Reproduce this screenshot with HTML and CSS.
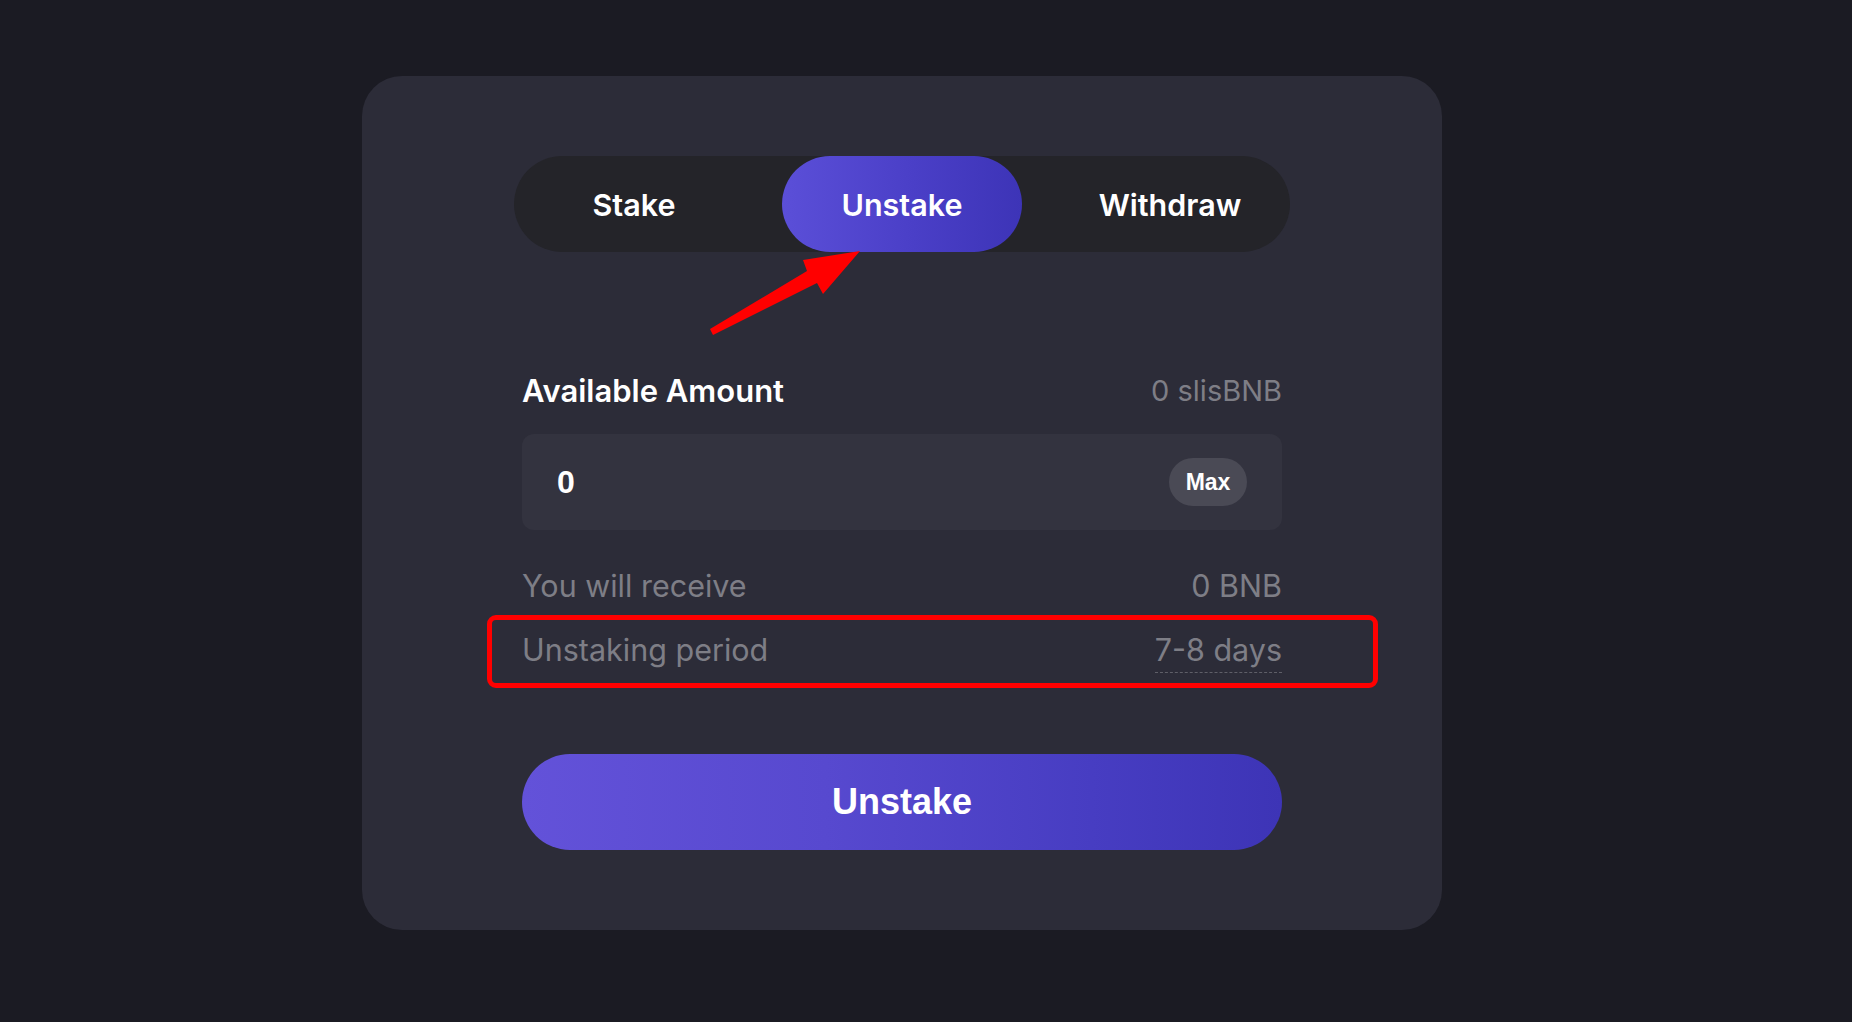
FILE: index.html
```html
<!DOCTYPE html>
<html lang="en">
<head>
<meta charset="utf-8">
<title>Unstake</title>
<link rel="stylesheet" href="styles.css">
</head>
<body>
<main class="card">
  <nav class="tabs">
    <button class="tab">Stake</button>
    <button class="tab active">Unstake</button>
    <button class="tab">Withdraw</button>
  </nav>

  <div class="row head-row">
    <span class="label-strong">Available Amount</span>
    <span class="muted">0 slisBNB</span>
  </div>

  <div class="input-box">
    <span class="amount">0</span>
    <button class="max">Max</button>
  </div>

  <div class="row info-row first">
    <span class="muted">You will receive</span>
    <span class="muted">0 BNB</span>
  </div>
  <div class="row info-row second">
    <span class="muted">Unstaking period</span>
    <span class="muted dashed">7-8 days</span>
  </div>

  <button class="submit">Unstake</button>
</main>

<div class="highlight-box"></div>
<svg class="arrow" width="1852" height="1022" viewBox="0 0 1852 1022">
  <polygon fill="#ff0000" points="860,251 803,260 807,271 710,329 713,335 817,283 823,294"/>
</svg>
</body>
</html>
```

FILE: styles.css
```css
* { box-sizing: border-box; }

html, body {
  margin: 0;
  padding: 0;
}

body {
  width: 1852px;
  height: 1022px;
  background: #1b1b23;
  font-family: Inter, "Noto Sans", sans-serif;
  overflow: hidden;
  position: relative;
}

.card {
  width: 1080px;
  height: 854px;
  margin: 76px 0 0 362px;
  padding: 80px 160px;
  background: #2c2c38;
  border-radius: 40px;
  display: flex;
  flex-direction: column;
}

.tabs {
  width: 776px;
  margin: 0 -8px;
  height: 96px;
  background: #242429;
  border-radius: 48px;
  display: flex;
  gap: 28px;
}

.tab {
  width: 240px;
  height: 96px;
  border: 0;
  border-radius: 48px;
  background: transparent;
  color: #ffffff;
  font-family: Inter, "Noto Sans", sans-serif;
  font-size: 30.5px;
  font-weight: 600;
  padding: 0;
}

.tab.active {
  background: linear-gradient(90deg, #5b4fd8 0%, #4a3fc7 55%, #3d34b7 100%);
}

.row {
  display: flex;
  justify-content: space-between;
  align-items: flex-start;
  height: 40px;
  line-height: 40px;
}

.head-row { margin-top: 119px; }

.label-strong {
  color: #ffffff;
  font-size: 31px;
  font-weight: 600;
}

.muted {
  color: #7e7e86;
  font-size: 30.5px;
  font-weight: 400;
}

.head-row .muted { font-size: 29px; }

.input-box {
  margin-top: 23px;
  height: 96px;
  background: #33333f;
  border-radius: 12px;
  display: flex;
  align-items: center;
  justify-content: space-between;
  padding: 0 35px 0 35px;
}

.amount {
  color: #ffffff;
  font-family: "Liberation Sans", Arial, sans-serif;
  font-weight: 700;
  font-size: 32px;
}

.max {
  height: 48px;
  width: 78px;
  border: 0;
  border-radius: 24px;
  background: #4a4a55;
  color: #ffffff;
  font-family: "Liberation Sans", Arial, sans-serif;
  font-weight: 700;
  font-size: 23px;
  padding: 0;
}

.info-row.first { margin-top: 36px; }
.info-row.second { margin-top: 24px; }

.dashed {
  display: inline-block;
  line-height: 40px;
  padding-bottom: 2px;
  border-bottom: 1px dashed #5f5f68;
}

.submit {
  margin-top: 84px;
  height: 96px;
  width: 760px;
  border: 0;
  border-radius: 48px;
  background: linear-gradient(90deg, #6352d9 0%, #5749cf 40%, #473dc2 75%, #3d34b6 100%);
  color: #ffffff;
  font-family: "Liberation Sans", Arial, sans-serif;
  font-weight: 700;
  font-size: 36px;
  padding: 0;
}

.highlight-box {
  position: absolute;
  left: 487px;
  top: 615px;
  width: 891px;
  height: 73px;
  border: 5px solid #ff0000;
  border-radius: 9px;
  pointer-events: none;
}

.arrow {
  position: absolute;
  left: 0;
  top: 0;
  pointer-events: none;
}
```
